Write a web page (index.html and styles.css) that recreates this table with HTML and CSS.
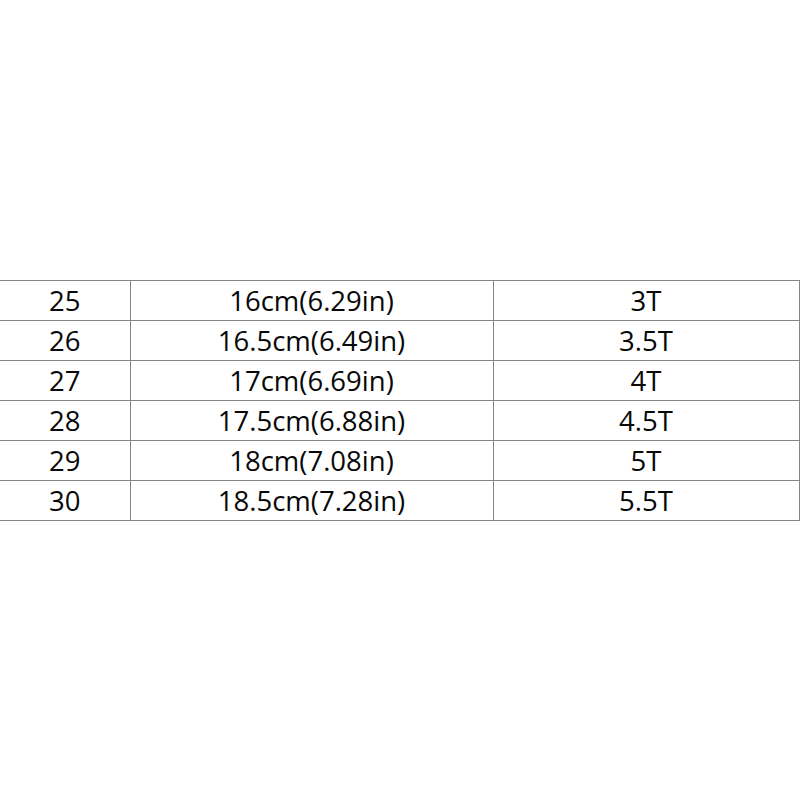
FILE: index.html
```html
<!DOCTYPE html>
<html>
<head>
<meta charset="utf-8">
<link rel="stylesheet" href="styles.css">
</head>
<body>
<div class="page">
  <table class="sizes">
    <colgroup><col class="c1"><col class="c2"><col class="c3"></colgroup>
    <tr><td>25</td><td>16cm(6.29in)</td><td>3T</td></tr>
    <tr><td>26</td><td>16.5cm(6.49in)</td><td>3.5T</td></tr>
    <tr><td>27</td><td>17cm(6.69in)</td><td>4T</td></tr>
    <tr><td>28</td><td>17.5cm(6.88in)</td><td>4.5T</td></tr>
    <tr><td>29</td><td>18cm(7.08in)</td><td>5T</td></tr>
    <tr><td>30</td><td>18.5cm(7.28in)</td><td>5.5T</td></tr>
  </table>
</div>
</body>
</html>
```

FILE: styles.css
```css
html, body {
  margin: 0;
  padding: 0;
  background: #ffffff;
}
.page {
  width: 800px;
  height: 800px;
  display: flex;
  flex-direction: column;
  justify-content: center;
}
.sizes {
  width: 799px;
  border-collapse: collapse;
  table-layout: fixed;
  font-family: "Open Sans", "Noto Sans", sans-serif;
  font-size: 27.5px;
  color: #080808;
}
.c1 { width: 130px; }
.c2 { width: 363px; }
.c3 { width: 306px; }
.sizes td {
  height: 39px;
  padding: 0;
  text-align: center;
  vertical-align: middle;
  line-height: 39px;
  border-top: 1px solid #858585;
  border-bottom: 1px solid #858585;
  border-left: 1px solid #858585;
}
.sizes td:first-child {
  border-left: none;
}
.sizes td:last-child {
  border-right: 1px solid #858585;
}
```
